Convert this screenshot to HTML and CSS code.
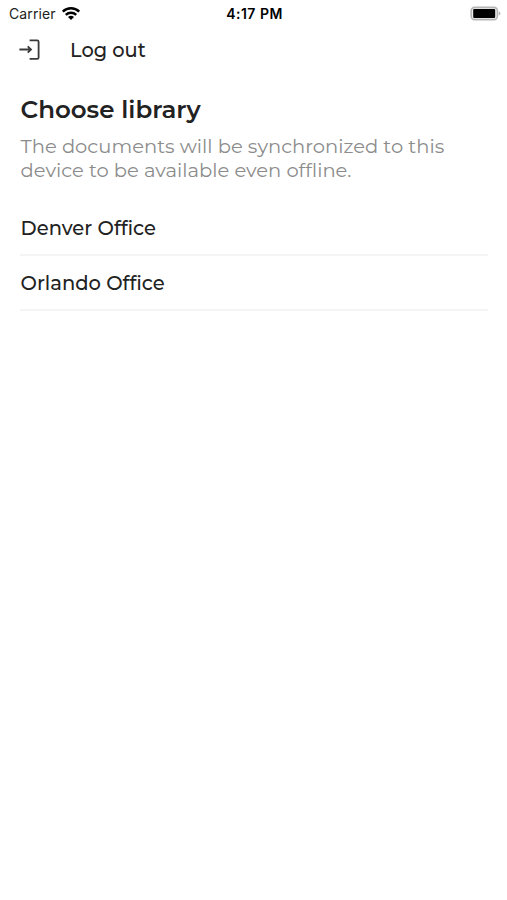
FILE: index.html
```html
<!DOCTYPE html>
<html lang="en">
<head>
    <meta charset="UTF-8">
    <meta name="viewport" content="width=device-width, initial-scale=1.0">
    <title>Choose library</title>
    <link rel="stylesheet" href="styles.css">
</head>
<body>
    <!-- Status bar -->
    <header class="status-bar">
        <div class="carrier">
            <span>Carrier</span>
            <svg width="20" height="14" viewBox="0 0 20 14">
                <path d="M1.8 4.6a12 12 0 0 1 16.4 0M4.8 7.8a7.6 7.6 0 0 1 10.4 0" fill="none" stroke="#000" stroke-width="2.5"/>
                <path d="M10 13L7 10.1a4.3 4.3 0 0 1 6 0z"/>
            </svg>
        </div>
        <div class="time">4:17 PM</div>
        <div class="battery">
            <svg width="31" height="14" viewBox="0 0 31 14">
                <rect x="1.2" y="0.4" width="26.2" height="12.2" rx="3.4" fill="#eee" stroke="#b5b5b5" stroke-width="1.6"/>
                <rect x="3.2" y="2.1" width="22" height="8.8" rx="1"/>
                <path d="M28.7 4.2q1.7.7 1.7 2.3t-1.7 2.3z" fill="#b5b5b5"/>
            </svg>
        </div>
    </header>

    <button class="logout">
        <svg width="22" height="22" viewBox="0 0 22 22">
            <path d="M0.4 10.5h11.4M8.7 7.3l3.3 3.2-3.3 3.2M10.6 1.3h7.6q1.4 0 1.4 1.4v15.8q0 1.4-1.4 1.4h-7.6" fill="none" stroke="#3a3a3a" stroke-width="1.8"/>
        </svg>
        <span>Log out</span>
    </button>

    <main class="content">
        <h1>Choose library</h1>
        <p class="description">The documents will be synchronized to this device to be available even offline.</p>
        <ul class="libraries">
            <li>Denver Office</li>
            <li>Orlando Office</li>
        </ul>
    </main>
</body>
</html>
```
FILE: styles.css
```css
* {
    box-sizing: border-box;
}
body {
    margin: 0;
    background: #fff;
    color: #222;
    font-family: Montserrat, "Open Sans", sans-serif;
}
.status-bar {
    display: grid;
    grid-template-columns: 1fr auto 1fr;
    align-items: center;
    height: 27px;
    padding: 0 6px 0 9px;
    color: #000;
    font-family: Inter, sans-serif;
    font-size: 14px;
}
.carrier {
    display: flex;
    align-items: center;
    gap: 5px;
    color: #222;
    letter-spacing: 0.1px;
}
.time {
    font-weight: 600;
    letter-spacing: 0.5px;
    padding-right: 1px;
}
.battery {
    display: flex;
    justify-content: flex-end;
}
.battery svg {
    overflow: visible;
}
.logout {
    display: flex;
    align-items: center;
    gap: 29px;
    height: 46px;
    padding: 0 19px;
    border: none;
    background: none;
    color: #222;
    font-family: inherit;
    font-size: 19.4px;
    font-weight: 500;
}
.content {
    padding: 20px 19px 0 20px;
}
h1 {
    margin: 0;
    padding-left: 0.6px;
    font-size: 24.5px;
    line-height: 32px;
    font-weight: 600;
}
.description {
    margin: 9px 0 0;
    padding-left: 0.6px;
    color: #8c8c8c;
    font-size: 19.53px;
    line-height: 24px;
}
.libraries {
    margin: 19px 0 0;
    padding: 0;
    list-style: none;
}
.libraries li {
    display: flex;
    align-items: center;
    height: 55px;
    padding-left: 0.6px;
    border-bottom: 2px solid #f4f4f4;
    font-size: 19.5px;
    font-weight: 500;
}
```
